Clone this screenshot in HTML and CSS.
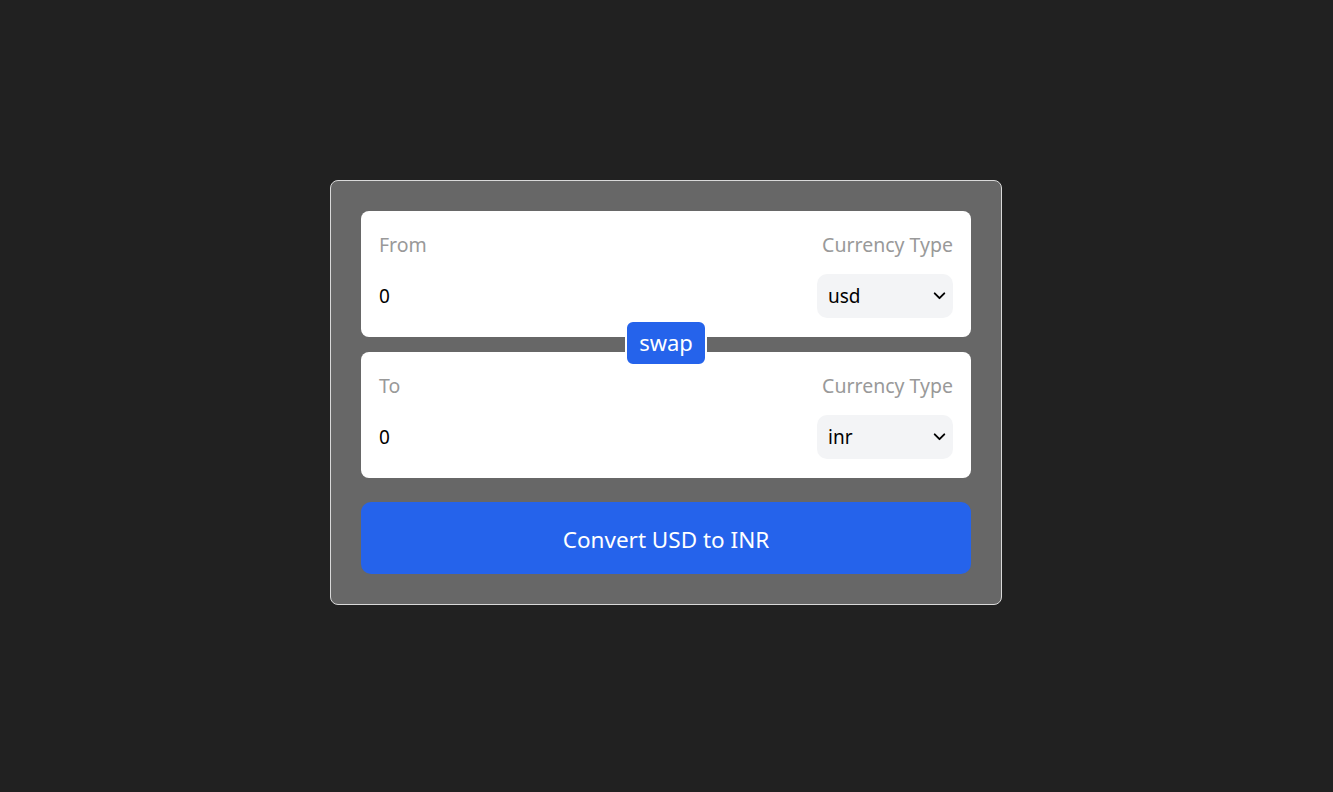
FILE: index.html
```html
<!DOCTYPE html>
<html lang="en">
<head>
    <meta charset="UTF-8">
    <title>Currency Converter</title>
    <link rel="stylesheet" href="styles.css">
</head>
<body>
<div class="page">
    <form class="card">
        <div class="box">
            <div class="row">
                <label class="label" for="from-amount">From</label>
                <span class="label">Currency Type</span>
            </div>
            <div class="row">
                <input id="from-amount" class="amount" type="number" value="0">
                <div class="select-wrap">
                    <select class="select">
                        <option>usd</option>
                        <option>inr</option>
                    </select>
                    <svg class="chevron" viewBox="0 0 16 16"><path d="M3.5 6 8 10.5 12.5 6" fill="none" stroke="#000" stroke-width="1.8" stroke-linecap="round" stroke-linejoin="round"/></svg>
                </div>
            </div>
        </div>
        <div class="swap-wrap">
            <button type="button" class="swap">swap</button>
        </div>
        <div class="box">
            <div class="row">
                <label class="label" for="to-amount">To</label>
                <span class="label">Currency Type</span>
            </div>
            <div class="row">
                <input id="to-amount" class="amount" type="number" value="0" disabled>
                <div class="select-wrap">
                    <select class="select">
                        <option>inr</option>
                        <option>usd</option>
                    </select>
                    <svg class="chevron" viewBox="0 0 16 16"><path d="M3.5 6 8 10.5 12.5 6" fill="none" stroke="#000" stroke-width="1.8" stroke-linecap="round" stroke-linejoin="round"/></svg>
                </div>
            </div>
        </div>
        <button type="submit" class="convert">Convert USD to INR</button>
    </form>
</div>
</body>
</html>
```

FILE: styles.css
```css
* {
    box-sizing: border-box;
}

body {
    margin: 0;
    background-color: #212121;
    font-family: "Noto Sans", "Open Sans", sans-serif;
}

.page {
    display: flex;
    justify-content: center;
    align-items: flex-start;
    min-height: 100vh;
    padding-top: 180px;
    padding-right: 1px;
}

.card {
    width: 672px;
    padding: 30px;
    border: 1px solid #d9d9d9;
    border-radius: 8px;
    background-color: #676767;
    margin: 0;
}

.box {
    display: flex;
    flex-direction: column;
    height: 126px;
    padding: 21px 18px 18px 18px;
    border-radius: 8px;
    background-color: #fff;
    gap: 16px;
}

.row {
    display: flex;
    justify-content: space-between;
    align-items: center;
}

.label {
    color: #999;
    font-size: 19.5px;
    line-height: 26px;
}

.amount {
    width: 300px;
    border: none;
    outline: none;
    padding: 0;
    margin: 0;
    background: transparent;
    font-family: inherit;
    font-size: 19px;
    color: #000;
    -moz-appearance: textfield;
}

.amount::-webkit-inner-spin-button,
.amount::-webkit-outer-spin-button {
    -webkit-appearance: none;
    margin: 0;
}

.select-wrap {
    position: relative;
    width: 136px;
    height: 44px;
}

.select {
    appearance: none;
    -webkit-appearance: none;
    width: 100%;
    height: 100%;
    border: none;
    outline: none;
    border-radius: 10px;
    background-color: #f3f4f6;
    padding: 0 12px 0 11px;
    font-family: inherit;
    font-size: 19px;
    color: #000;
}

.chevron {
    position: absolute;
    right: 5px;
    top: 13px;
    width: 17px;
    height: 17px;
    pointer-events: none;
}

.swap-wrap {
    display: flex;
    justify-content: center;
    height: 15px;
    position: relative;
    z-index: 2;
}

.swap {
    position: absolute;
    top: -17px;
    width: 82px;
    height: 46px;
    border: 2px solid #fff;
    border-radius: 8px;
    background-color: #2563eb;
    color: #fff;
    font-family: inherit;
    font-size: 22px;
    padding: 0 0 3px 0;
    cursor: pointer;
}

.convert {
    display: block;
    width: 100%;
    height: 72px;
    margin-top: 24px;
    border: none;
    border-radius: 10px;
    background-color: #2563eb;
    color: #fff;
    font-family: inherit;
    font-size: 22.5px;
    padding: 2px 0 0 0;
    cursor: pointer;
}
```
